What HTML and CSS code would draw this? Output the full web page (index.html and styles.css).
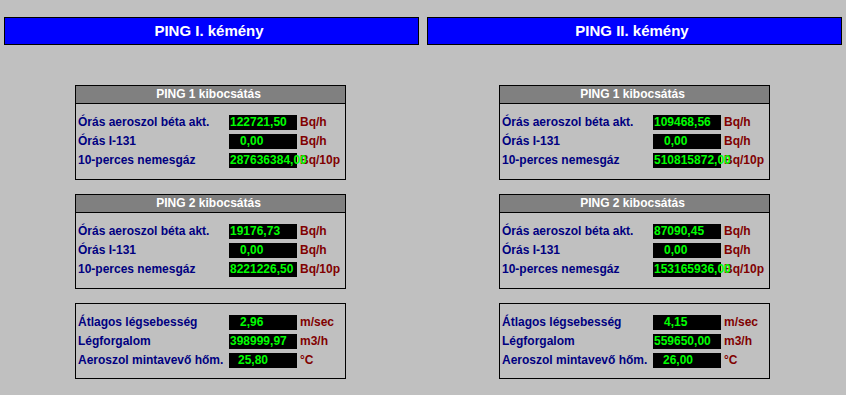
FILE: index.html
```html
<!doctype html>
<html>
  <head>
    <title> PING kémény </title>
	<meta charset="utf-8" />
	<link rel="stylesheet" href="styles.css">
  </head>
  <body>
  <div class="screen">
	<div class="column">
		<div class="header">PING I. kémény</div>
		<div class="panels">
			<div class="panel">
				<div class="title">PING 1 kibocsátás</div>
				<div class="rows">
					<div class="label">Órás aeroszol béta akt.</div><div class="value">122721,50</div><div class="unit">Bq/h</div>
					<div class="label">Órás I-131</div><div class="value pad-11">0,00</div><div class="unit">Bq/h</div>
					<div class="label">10-perces nemesgáz</div><div class="value">287636384,00</div><div class="unit">Bq/10p</div>
				</div>
			</div>
			<div class="panel">
				<div class="title">PING 2 kibocsátás</div>
				<div class="rows">
					<div class="label">Órás aeroszol béta akt.</div><div class="value">19176,73</div><div class="unit">Bq/h</div>
					<div class="label">Órás I-131</div><div class="value pad-11">0,00</div><div class="unit">Bq/h</div>
					<div class="label">10-perces nemesgáz</div><div class="value">8221226,50</div><div class="unit">Bq/10p</div>
				</div>
			</div>
			<div class="panel">
				<div class="rows short">
					<div class="label">Átlagos légsebesség</div><div class="value pad-11">2,96</div><div class="unit">m/sec</div>
					<div class="label">Légforgalom</div><div class="value">398999,97</div><div class="unit">m3/h</div>
					<div class="label">Aeroszol mintavevő hőm.</div><div class="value pad-9">25,80</div><div class="unit">°C</div>
				</div>
			</div>
		</div>
	</div>
	<div class="column">
		<div class="header">PING II. kémény</div>
		<div class="panels right">
			<div class="panel">
				<div class="title">PING 1 kibocsátás</div>
				<div class="rows">
					<div class="label">Órás aeroszol béta akt.</div><div class="value">109468,56</div><div class="unit">Bq/h</div>
					<div class="label">Órás I-131</div><div class="value pad-11">0,00</div><div class="unit">Bq/h</div>
					<div class="label">10-perces nemesgáz</div><div class="value">510815872,00</div><div class="unit">Bq/10p</div>
				</div>
			</div>
			<div class="panel">
				<div class="title">PING 2 kibocsátás</div>
				<div class="rows">
					<div class="label">Órás aeroszol béta akt.</div><div class="value">87090,45</div><div class="unit">Bq/h</div>
					<div class="label">Órás I-131</div><div class="value pad-11">0,00</div><div class="unit">Bq/h</div>
					<div class="label">10-perces nemesgáz</div><div class="value">153165936,00</div><div class="unit">Bq/10p</div>
				</div>
			</div>
			<div class="panel">
				<div class="rows short">
					<div class="label">Átlagos légsebesség</div><div class="value pad-11">4,15</div><div class="unit">m/sec</div>
					<div class="label">Légforgalom</div><div class="value">559650,00</div><div class="unit">m3/h</div>
					<div class="label">Aeroszol mintavevő hőm.</div><div class="value pad-10">26,00</div><div class="unit">°C</div>
				</div>
			</div>
		</div>
	</div>
  </div>
  </body>
</html>
```

FILE: styles.css
```css
* {
	padding:0;
	margin:0;
	box-sizing:border-box;
}

body{
	background-color:#C0C0C0;
	font-family:"Liberation Sans", Arial, sans-serif;
	font-weight:bold;
	width:846px;
	height:395px;
	overflow:hidden;
}

.screen{
	display:flex;
	gap:8px;
	padding:17px 4px 0 4px;
}

.column{
	width:415px;
}

.header{
	height:28px;
	border:1px solid #000;
	background-color:#0000FF;
	color:#FFF;
	font-size:15px;
	line-height:26px;
	text-align:center;
	padding-right:5px;
}

.panels{
	display:flex;
	flex-direction:column;
	gap:14px;
	padding:40px 0 0 71px;
}

.panels.right{
	padding-left:72px;
}

.panel{
	width:271px;
	border:1px solid #000;
}

.title{
	height:18px;
	border-bottom:1px solid #000;
	background-color:#808080;
	color:#FFF;
	font-size:12px;
	line-height:17px;
	text-align:center;
	padding-right:4px;
}

.rows{
	display:grid;
	grid-template-columns:151px 68px auto;
	grid-auto-rows:15px;
	row-gap:4px;
	padding:11px 0 11px 2px;
	font-size:12px;
	line-height:15px;
}

.rows.short{
	padding-bottom:10px;
}

.label{
	color:#000080;
	white-space:nowrap;
}

.value{
	position:relative;
	z-index:1;
	background-color:#000;
	color:#00FF00;
	white-space:nowrap;
	overflow:visible;
	padding-left:1px;
}

.value.pad-11{
	padding-left:11px;
}

.value.pad-10{
	padding-left:10px;
}

.value.pad-9{
	padding-left:9px;
}

.unit{
	color:#800000;
	padding-left:3px;
	white-space:nowrap;
}
```
